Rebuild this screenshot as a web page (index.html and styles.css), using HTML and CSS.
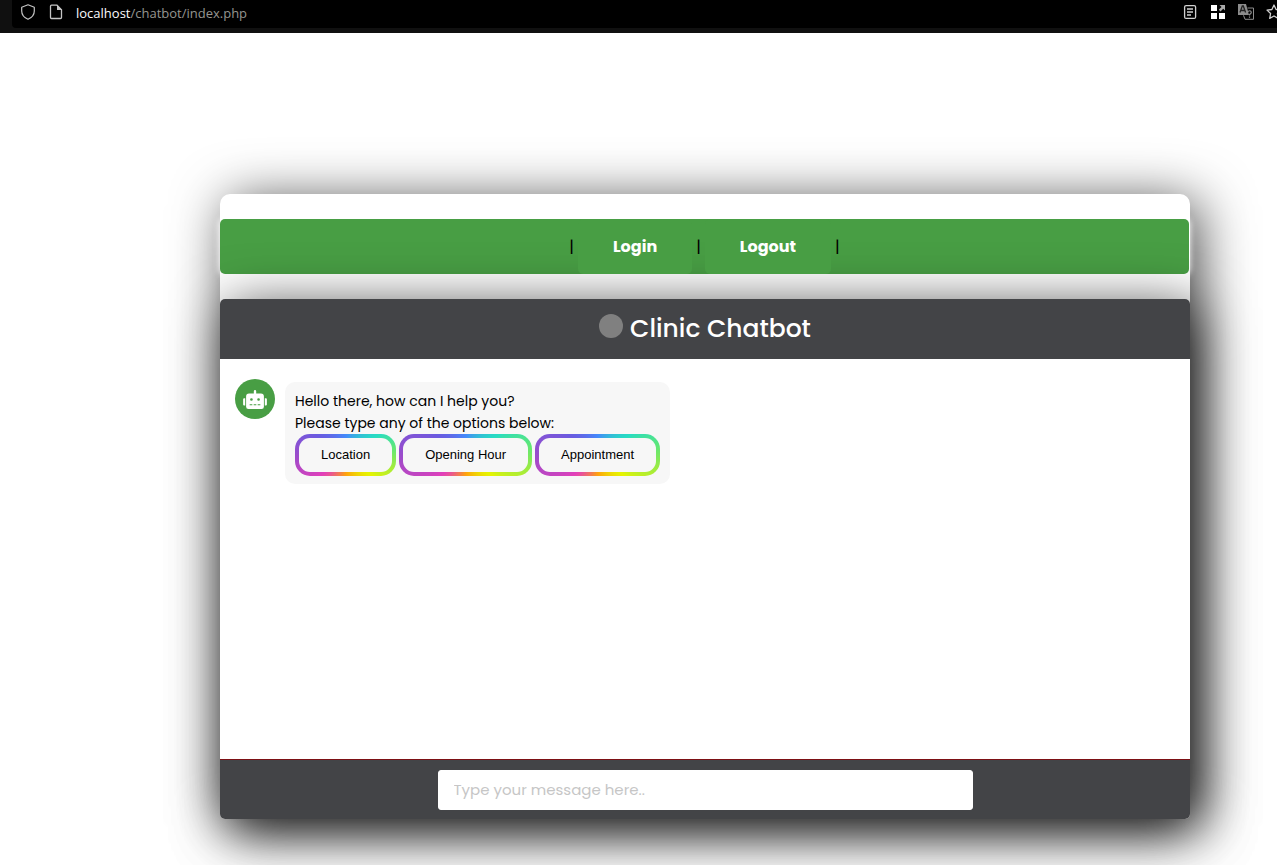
FILE: index.html
```html
<!DOCTYPE html>
<html lang="en">
<head>
<meta charset="utf-8">
<title>Clinic Chatbot</title>
<link rel="stylesheet" href="styles.css">
</head>
<body>
<div class="browser-bar">
  <div class="address">
    <svg class="bar-icon" viewBox="0 0 16 16" aria-hidden="true"><path d="M8 .8 14.3 3.2V7c0 3.6-2.4 6.6-6.3 8.3C4.100 13.600 1.700 10.600 1.700 7V3.200Z" fill="none" stroke="#c4c4c4" stroke-width="1.200" stroke-linejoin="round"/></svg>
    <svg class="bar-icon" viewBox="0 0 16 16" aria-hidden="true"><path d="M3.500 1.200H9L13.500 5.700V13.500a1 1 0 0 1-1 1h-9a1 1 0 0 1-1-1V2.200a1 1 0 0 1 1-1Z" fill="none" stroke="#c4c4c4" stroke-width="1.300"/><path d="M9 1v5h5Z" fill="#c4c4c4"/></svg>
    <span class="url"><span class="host">localhost</span>/chatbot/index.php</span>
  </div>
  <div class="actions">
    <svg class="bar-icon" viewBox="0 0 16 16" aria-hidden="true"><rect x="2.600" y="1.600" width="11" height="12.800" rx="1.500" fill="none" stroke="#d0d0d0" stroke-width="1.300"/><path d="M5 5h6M5 8h6M5 11h4" stroke="#d0d0d0" stroke-width="1.300"/></svg>
    <svg class="bar-icon" viewBox="0 0 16 16" aria-hidden="true"><path d="M1 1h6v6H1zM1 9h6v6H1zM9 9h6v6H9z" fill="#fff"/><path d="M9.500 1H15v5.500L13.200 4.700 10.500 7.400 8.800 5.700 11.500 3Z" fill="#aaa"/></svg>
    <svg class="bar-icon" viewBox="0 0 16 16" aria-hidden="true"><path d="M0 0h8l3 11H0Z" fill="#8c8c8c"/><path d="M2 8.500 4.300 2h1L7.600 8.500M3 6.500h3.800" fill="none" stroke="#222" stroke-width="1.300"/><path d="M9.500 4H15.500V15.300H7l-1.500-4" fill="none" stroke="#8c8c8c"/><path d="M10 7.500q2-1.500 3 0t-1.500 3v1M11.500 12.500v1.200" fill="none" stroke="#8c8c8c" stroke-width="1.200"/></svg>
    <svg class="bar-icon" viewBox="0 0 16 16" aria-hidden="true"><path d="m8 1 2.100 4.500 4.900.6-3.600 3.400.9 4.900L8 12l-4.300 2.400.9-4.900L1 6.100l4.900-.6Z" fill="none" stroke="#d0d0d0" stroke-width="1.300" stroke-linejoin="round"/></svg>
  </div>
</div>
<main class="card">
  <nav class="nav">
    <span>|</span><a class="nav-link" href="#login">Login</a><span>|</span><a class="nav-link" href="#logout">Logout</a><span>|</span>
  </nav>
  <section class="chat">
    <header class="title"><span class="dot"></span><h1>Clinic Chatbot</h1></header>
    <div class="messages">
      <div class="avatar">
        <svg class="robot" viewBox="0 0 640 512" aria-hidden="true"><path fill="#fff" d="M28 224h28v192H28a28 28 0 0 1-28-28V252a28 28 0 0 1 28-28Zm532-48v272a64 64 0 0 1-64 64H144a64 64 0 0 1-64-64V176a80 80 0 0 1 80-80h128V32a32 32 0 0 1 64 0v64h128a80 80 0 0 1 80 80Zm80 76v136a28 28 0 0 1-28 28h-28V224h28a28 28 0 0 1 28 28Z"/><path fill="#489e44" d="M188 256a36 36 0 1 0 72 0 36 36 0 1 0-72 0Zm192 0a36 36 0 1 0 72 0 36 36 0 1 0-72 0ZM176 384h72v28h-72Zm108 0h72v28h-72Zm108 0h72v28h-72Z"/></svg>
      </div>
      <div class="bubble">
        <p>Hello there, how can I help you?<br>Please type any of the options below:</p>
        <div class="options">
          <button class="option" type="button">Location</button>
          <button class="option" type="button">Opening Hour</button>
          <button class="option" type="button">Appointment</button>
        </div>
      </div>
    </div>
    <form class="composer"><input class="field" type="text" aria-label="Message" placeholder="Type your message here.."></form>
  </section>
</main>
</body>
</html>
```
FILE: styles.css
```css
* { box-sizing: border-box; }

body {
  min-height: 100vh;
  margin: 0;
  background: #fff;
  color: #000;
  font-family: Poppins, Inter, sans-serif;
  overflow-x: hidden;
}

.browser-bar {
  display: flex;
  justify-content: space-between;
  height: 33px;
  padding-left: 12px;
  background: #101010;
  overflow: hidden;
}

.address,
.actions {
  display: flex;
  align-items: center;
  gap: 12px;
  height: 28px;
  padding: 0 0 4px 8px;
  background: #000;
}

.address { flex: 1; border-bottom-left-radius: 4px; }
.actions { margin-right: -5px; }
.bar-icon { width: 16px; height: 16px; flex: none; }

.url {
  padding-top: 2px;
  color: #959590;
  font: 13px/20px "Open Sans", sans-serif;
}

.host { color: #fbfbfe; }

.card {
  margin: 161px 87px 0 220px;
  padding-top: 25px;
  border-radius: 10px;
  background: #fff;
  box-shadow: 8px 8px 54px rgba(0, 0, 0, .75);
}

.nav {
  display: flex;
  justify-content: center;
  align-items: center;
  gap: 4px;
  height: 55px;
  margin: 0 1px 25px 0;
  border-radius: 5px;
  background: #489e44;
  box-shadow: 0 0 6px 1px #fff;
  font-size: 16px;
}

.nav-link {
  position: relative;
  z-index: 1;
  padding: 0 35px;
  border-radius: 5px;
  background: #489e44;
  color: #fff;
  font-weight: 700;
  line-height: 55px;
  text-decoration: none;
}

.chat {
  border-radius: 5px;
  background: #fff;
  box-shadow: 8px 8px 54px rgba(0, 0, 0, .75);
}

.title {
  display: flex;
  justify-content: center;
  align-items: center;
  gap: 7px;
  height: 60px;
  border-radius: 5px 5px 0 0;
  background: #434447;
  color: #fff;
}

.title h1 { margin: 0; font-size: 25px; font-weight: 500; }

.dot {
  width: 24px;
  height: 24px;
  margin-bottom: 6px;
  border-radius: 50%;
  background: #808080;
}

.messages {
  display: flex;
  align-items: flex-start;
  gap: 10px;
  height: 400px;
  padding: 20px 15px;
}

.avatar {
  display: grid;
  place-items: center;
  width: 40px;
  height: 40px;
  border-radius: 50%;
  background: #489e44;
}

.robot { width: 24px; height: 19px; }

.bubble {
  margin-top: 3px;
  padding: 8px 10px;
  border-radius: 10px;
  background: #f7f7f7;
}

.bubble p { margin: 0; font-size: 14px; line-height: 22px; }
.options { display: flex; gap: 3px; }

.option {
  height: 42px;
  padding: 0 22px;
  border: 4px solid transparent;
  border-radius: 15px;
  background:
    linear-gradient(#f7f7f7, #f7f7f7) padding-box,
    conic-gradient(#4489fb, #27dcc3 58deg, #5be67b 80deg, #a4ec3c 105deg, #e6f400 128deg, #ffa30c 178deg, #e33fba 230deg, #9a4ccb 270deg, #6a5be0 305deg, #4489fb) border-box;
  color: #000;
  font: 13px/16px "Liberation Sans", Arial, sans-serif;
}

.composer {
  display: flex;
  justify-content: center;
  align-items: center;
  height: 60px;
  padding-top: 1px;
  border-top: 1px solid #7c1014;
  border-radius: 0 0 5px 5px;
  background: #434447;
}

.field {
  width: 535px;
  max-width: 90%;
  height: 40px;
  padding: 0 15px 2px;
  border: 1px solid #fff;
  border-radius: 3px;
  background: #fff;
  color: #000;
  font: 15px/22px Poppins, Inter, sans-serif;
}

.field::placeholder { color: #c6c6c6; opacity: 1; }
```
